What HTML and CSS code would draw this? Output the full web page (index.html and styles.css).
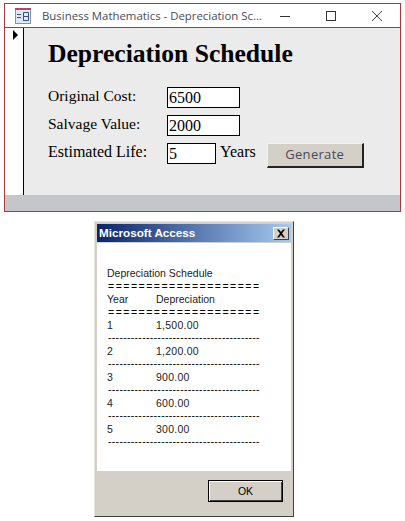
FILE: index.html
```html
<!DOCTYPE html>
<html lang="en">
<head>
<meta charset="utf-8">
<title>Depreciation Schedule</title>
<link rel="stylesheet" href="styles.css">
</head>
<body>
<div class="window">
  <div class="titlebar">
    <svg class="app-icon" width="16" height="16" viewBox="0 0 16 16">
      <rect x="0.5" y="0.5" width="15" height="15" fill="#dfe8f5" stroke="#7f93b5"/>
      <rect x="0" y="0" width="16" height="2" fill="#b5485e"/>
      <path d="M2 6.500H6M2 9.500H6M8.500 4.500H13.500V12.500H8.500ZM8.500 8.500H13.500" fill="none" stroke="#36507f"/>
    </svg>
    <span class="win-title">Business Mathematics - Depreciation Sc...</span>
    <div class="win-controls">
      <svg width="10" height="10" viewBox="0 0 10 10"><path d="M0 5.500H10" stroke="#333"/></svg>
      <svg width="10" height="10" viewBox="0 0 10 10"><rect x="0.500" y="0.500" width="9" height="9" fill="none" stroke="#333"/></svg>
      <svg width="10" height="10" viewBox="0 0 10 10"><path d="M0 0L10 10M10 0L0 10" stroke="#444" fill="none"/></svg>
    </div>
  </div>
  <div class="form-area">
    <div class="selector"><span class="arrow"></span></div>
    <div class="form">
      <h1 class="heading">Depreciation Schedule</h1>
      <div class="row row-first"><span class="label">Original Cost:</span><span class="field">6500</span></div>
      <div class="row"><span class="label">Salvage Value:</span><span class="field">2000</span></div>
      <div class="row">
        <span class="label label-wide">Estimated Life:</span><span class="field field-short">5</span>
        <span class="unit">Years</span>
        <span class="generate">Generate</span>
      </div>
    </div>
  </div>
  <div class="statusbar"></div>
</div>

<div class="dialog">
  <div class="dialog-title">
    <span>Microsoft Access</span>
    <span class="close-btn"><svg width="10" height="9" viewBox="0 0 10 9"><path d="M1 0.500L3 0.500L5 3L7 0.500L9 0.500L6 4.500L9 8.500L7 8.500L5 6L3 8.500L1 8.500L4 4.500Z" fill="#000"/></svg></span>
  </div>
  <div class="message">
    <div class="msg-line">Depreciation Schedule</div>
    <div class="msg-line rule-eq">====================</div>
    <div class="msg-line cols"><span>Year</span><span>Depreciation</span></div>
    <div class="msg-line rule-eq">====================</div>
    <div class="msg-line cols num"><span>1</span><span>1,500.00</span></div>
    <div class="msg-line rule-dash">----------------------------------------</div>
    <div class="msg-line cols num"><span>2</span><span>1,200.00</span></div>
    <div class="msg-line rule-dash">----------------------------------------</div>
    <div class="msg-line cols num"><span>3</span><span>900.00</span></div>
    <div class="msg-line rule-dash">----------------------------------------</div>
    <div class="msg-line cols num"><span>4</span><span>600.00</span></div>
    <div class="msg-line rule-dash">----------------------------------------</div>
    <div class="msg-line cols num"><span>5</span><span>300.00</span></div>
    <div class="msg-line rule-dash">----------------------------------------</div>
  </div>
  <div class="dialog-foot"><span class="ok">OK</span></div>
</div>
</body>
</html>
```
FILE: styles.css
```css
html, body { margin: 0; padding: 0; background: #fff; }
body { width: 405px; height: 521px; overflow: hidden; font-family: "Liberation Serif", serif; color: #000; }

.window {
  box-sizing: border-box;
  width: 397px;
  height: 209px;
  margin: 3px 0 0 4px;
  border: 1px solid #a83a3c;
  display: flex;
  flex-direction: column;
}
.titlebar {
  height: 24px;
  flex: none;
  box-sizing: border-box;
  border-bottom: 1px solid #a83a3c;
  display: flex;
  align-items: center;
  padding-left: 10px;
  background: #fff;
}
.win-title { margin-left: 11px; font: 11.400px "Open Sans", sans-serif; color: #4a4a5e; white-space: nowrap; width: 238px; }
.win-controls { display: flex; align-items: center; gap: 36px; }

.form-area { flex: 1; display: flex; min-height: 0; }
.selector { flex: none; border-right: 1px solid #000; background: #fff; padding: 2px 0 0 8px; width: 10px; }
.arrow { display: block; width: 0; height: 0; border-left: 5px solid #000; border-top: 5.500px solid transparent; border-bottom: 5.500px solid transparent; }
.form { flex: 1; background: #ebebeb; padding: 9px 0 0 24px; }
.heading { margin: 0; font: bold 25.600px/34px "Liberation Serif", serif; color: #000; }
.row { display: flex; align-items: center; height: 21px; margin-top: 7px; font-size: 15.500px; }
.row-first { margin-top: 16px; }
.label { width: 119px; flex: none; position: relative; top: -2px; }
.label-wide { font-size: 16px; }
.field { box-sizing: border-box; width: 73px; height: 21px; background: #fff; border: 1px solid #000; padding-left: 1px; font-size: 16px; line-height: 19px; }
.field-short { width: 49px; }
.unit { margin-left: 4px; font-size: 16px; position: relative; top: -2px; }
.generate {
  box-sizing: border-box;
  margin-left: 11px;
  width: 97px; height: 25px;
  background: #d4d0c8;
  border-top: 1px solid #f4f2ee;
  border-left: 1px solid #f4f2ee;
  border-right: 2px solid #222;
  border-bottom: 2px solid #222;
  font: 13px/20px "Open Sans", sans-serif;
  letter-spacing: 0.3px;
  color: #4a4a5a;
  text-align: center;
  position: relative; top: 2px;
}
.statusbar { height: 16px; flex: none; background: #c5c6c9; }

.dialog {
  box-sizing: border-box;
  width: 200px; height: 296px;
  margin: 9px 0 0 94px;
  background: #d4d0c8;
  border: 1px solid;
  border-color: #e8e6e0 #404040 #404040 #e8e6e0;
  padding: 2px;
  display: flex;
  flex-direction: column;
}
.dialog-title {
  height: 18px; flex: none;
  background: linear-gradient(90deg, #0a246a, #a6caf0);
  color: #fff;
  font: bold 11.700px/18px "Liberation Sans", sans-serif;
  padding-left: 2px;
  display: flex;
  justify-content: space-between;
  align-items: center;
}
.close-btn {
  box-sizing: border-box;
  width: 16px; height: 13px;
  margin-right: 2px;
  background: #d4d0c8;
  border: 1px solid; border-color: #fff #404040 #404040 #fff;
  display: flex; align-items: center; justify-content: center;
}
.message { height: 228px; margin-top: 1px; background: #fff; padding: 24px 0 0 10px; box-sizing: border-box; flex: none; font: 10.500px "Liberation Sans", sans-serif; color: #222; }
.msg-line { height: 13px; line-height: 13px; white-space: nowrap; }
.cols { display: flex; }
.cols span:first-child { width: 49px; }
.num { letter-spacing: 0.250px; }
.rule-eq { letter-spacing: 1.500px; margin-left: 1px; color: #000; }
.rule-dash { letter-spacing: 0.300px; margin-left: 1px; line-height: 11px; color: #000; }
.dialog-foot { flex: 1; display: flex; justify-content: flex-end; align-items: flex-start; padding: 9px 8px 0 0; }
.ok {
  box-sizing: border-box;
  width: 75px; height: 22px;
  background: #d4d0c8;
  border: 1px solid #000;
  box-shadow: inset 1px 1px 0 #fff, inset -1px -1px 0 #404040;
  font: 10.500px/20px "Liberation Sans", sans-serif;
  text-align: center;
}
```
